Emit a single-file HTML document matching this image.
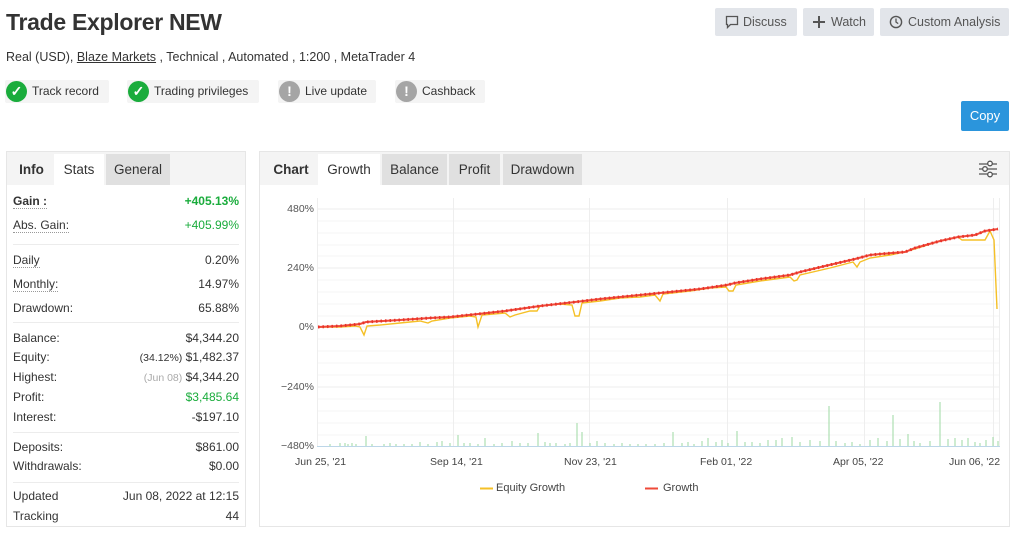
<!DOCTYPE html>
<html><head><meta charset="utf-8"><style>
*{box-sizing:border-box;margin:0;padding:0}
body{width:1024px;height:535px;background:#fff;font-family:"Liberation Sans",sans-serif;color:#333;position:relative;overflow:hidden}
.a{position:absolute}
h1{position:absolute;left:6px;top:9px;font-size:23px;font-weight:bold;color:#333;letter-spacing:-0.3px}
.sub{left:6px;top:50px;font-size:12.5px;color:#333;white-space:nowrap}
.sub u{text-decoration:underline}
.badge{position:absolute;top:80px;height:23px;background:#f4f4f4;border-radius:2px;font-size:12px;line-height:23px;padding-left:27px;white-space:nowrap}
.badge i{position:absolute;left:1px;top:1px;width:21px;height:21px;border-radius:50%;font-style:normal;color:#fff;text-align:center;line-height:21px;font-weight:bold;font-size:14px}
.btn{position:absolute;top:8px;height:28px;background:#e2e5ea;border-radius:2px;font-size:12.5px;color:#555;line-height:28px;padding-left:28px;white-space:nowrap}
.copy{left:961px;top:101px;width:48px;height:30px;background:#2b95dc;color:#fff;font-size:13px;line-height:30px;text-align:center;border-radius:2px}
.panel{border:1px solid #e6e6e6;background:#fff}
.tabs{position:absolute;left:0;top:0;right:0;height:33px;background:#f4f4f4}
.tab{position:absolute;top:2px;height:31px;line-height:31px;font-size:13.5px;text-align:center;color:#333}
.row{position:absolute;left:6px;right:6px;font-size:12px;height:16px;line-height:16px;white-space:nowrap}
.row span{position:absolute;right:0}
.dot{border-bottom:1px dotted #999}
.sep{position:absolute;left:6px;right:6px;height:1px;background:#ececec}
.g{color:#1aac3c}
.yl{position:absolute;font-size:10.5px;color:#555;text-align:right;width:40px}
.xl{position:absolute;font-size:10.5px;color:#444;white-space:nowrap}
</style></head><body>
<h1>Trade Explorer NEW</h1>
<div class="a sub">Real (USD), <u>Blaze Markets</u> , Technical , Automated , 1:200 , MetaTrader 4</div>
<div class="badge" style="left:5px;width:104px"><i style="background:#1aac3c">✓</i>Track record</div>
<div class="badge" style="left:127px;width:132px"><i style="background:#1aac3c">✓</i>Trading privileges</div>
<div class="badge" style="left:278px;width:98px"><i style="background:#a5a5a5">!</i>Live update</div>
<div class="badge" style="left:395px;width:90px"><i style="background:#a5a5a5">!</i>Cashback</div>

<div class="btn" style="left:715px;width:82px"><svg class="a" style="left:10px;top:7px" width="14" height="14" viewBox="0 0 14 14"><path d="M1.5 1.5h11v8h-7l-3 3v-3h-1z" fill="none" stroke="#555" stroke-width="1.3"/></svg>Discuss</div>
<div class="btn" style="left:803px;width:71px"><svg class="a" style="left:9px;top:7px" width="14" height="14"><path d="M7 1v12M1 7h12" stroke="#555" stroke-width="2"/></svg>Watch</div>
<div class="btn" style="left:880px;width:129px"><svg class="a" style="left:9px;top:7px" width="14" height="14"><circle cx="7" cy="7" r="5.6" fill="none" stroke="#555" stroke-width="1.4"/><path d="M7 3.5V7l2.2 1.6" fill="none" stroke="#555" stroke-width="1.3"/></svg>Custom Analysis</div>
<div class="a copy">Copy</div>

<div class="a panel" style="left:6px;top:151px;width:240px;height:376px">
 <div class="tabs" style="background:#f4f4f4"></div>
 <div class="tab" style="left:2px;width:45px;font-weight:bold">Info</div>
 <div class="tab" style="left:47px;width:50px;background:#fff">Stats</div>
 <div class="tab" style="left:99px;width:64px;background:#e0e0e0">General</div>
 <div class="row" style="top:41px"><b class="dot">Gain :</b><span class="g" style="font-weight:bold">+405.13%</span></div>
 <div class="row" style="top:65px"><i class="dot" style="font-style:normal">Abs. Gain:</i><span class="g">+405.99%</span></div>
 <div class="sep" style="top:92px"></div>
 <div class="row" style="top:100px"><i class="dot" style="font-style:normal">Daily</i><span>0.20%</span></div>
 <div class="row" style="top:124px"><i class="dot" style="font-style:normal">Monthly:</i><span>14.97%</span></div>
 <div class="row" style="top:148px">Drawdown:<span>65.88%</span></div>
 <div class="sep" style="top:170px"></div>
 <div class="row" style="top:178px">Balance:<span>$4,344.20</span></div>
 <div class="row" style="top:197px">Equity:<span><small style="font-size:10.5px">(34.12%)</small> $1,482.37</span></div>
 <div class="row" style="top:217px">Highest:<span><small style="font-size:10.5px;color:#aaa">(Jun 08)</small> $4,344.20</span></div>
 <div class="row" style="top:237px">Profit:<span class="g">$3,485.64</span></div>
 <div class="row" style="top:257px">Interest:<span>-$197.10</span></div>
 <div class="sep" style="top:280px"></div>
 <div class="row" style="top:287px">Deposits:<span>$861.00</span></div>
 <div class="row" style="top:306px">Withdrawals:<span>$0.00</span></div>
 <div class="sep" style="top:330px"></div>
 <div class="row" style="top:336px">Updated<span>Jun 08, 2022 at 12:15</span></div>
 <div class="row" style="top:356px">Tracking<span>44</span></div>
</div>

<div class="a panel" style="left:259px;top:151px;width:751px;height:376px">
 <div class="tabs"></div>
 <div class="tab" style="left:4px;width:54px;font-weight:bold">Chart</div>
 <div class="tab" style="left:58px;width:62px;background:#fff">Growth</div>
 <div class="tab" style="left:122px;width:65px;background:#e0e0e0">Balance</div>
 <div class="tab" style="left:189px;width:51px;background:#e0e0e0">Profit</div>
 <div class="tab" style="left:243px;width:79px;background:#e0e0e0">Drawdown</div>
 <svg class="a" style="left:717px;top:7px" width="22" height="20"><g stroke="#555" stroke-width="1.3" fill="#fff"><path d="M2 5h18M2 10h18M2 15h18"/><circle cx="13" cy="4.5" r="2.3"/><circle cx="8" cy="10" r="2.3"/><circle cx="13" cy="15.5" r="2.3"/></g></svg>
</div>

<svg class="a" style="left:0;top:0" width="1024" height="535">
 <g stroke="#eee" stroke-width="1">
  <path d="M317 221H1000M317 233H1000M317 245H1000M317 256H1000M317 280H1000M317 292H1000M317 304H1000M317 316H1000M317 339H1000M317 351H1000M317 363H1000M317 375H1000M317 399H1000M317 411H1000M317 423H1000M317 435H1000" stroke="#f5f5f5"/>
  <path d="M317 209H1000M317 268H1000M317 327H1000M317 387H1000"/>
  <path d="M317.5 198V447M453.5 198V447M589.5 198V447M727.5 198V447M864.5 198V447M993.5 198V447M999.5 198V447"/>
 </g>
 <path d="M317 446.5H1000" stroke="#bcd6e8"/>
 <g stroke="#9ed9a3" stroke-width="1">
  <path d="M330 446V444M340 446V443M345 446V443M348 446V444M352 446V443M356 446V444M366 446V436M372 446V444M384 446V444M390 446V443M396 446V444M404 446V444M412 446V444M420 446V442M428 446V444M437 446V442M442 446V441M450 446V443M458 446V435M464 446V443M470 446V443M478 446V444M485 446V438M494 446V444M502 446V443M512 446V441M520 446V443M528 446V443M538 446V433M545 446V442M550 446V443M556 446V443M565 446V444M570 446V443M577 446V423M582 446V432M590 446V443M597 446V441M605 446V443M614 446V444M622 446V443M630 446V444M638 446V444M646 446V444M655 446V444M664 446V443M673 446V432M682 446V443M688 446V442M694 446V444M702 446V441M708 446V438M716 446V442M722 446V440M728 446V443M737 446V431M745 446V442M752 446V442M760 446V443M768 446V440M776 446V440M782 446V438M792 446V437M800 446V442M810 446V440M820 446V441M829 446V406M836 446V441M845 446V443M852 446V442M860 446V444M870 446V440M878 446V438M887 446V441M893 446V415M900 446V439M908 446V434M914 446V441M920 446V443M930 446V441M940 446V402M948 446V439M955 446V438M962 446V440M968 446V438M975 446V442M980 446V443M986 446V440M993 446V437M998 446V441"/>
 </g>
 <polyline fill="none" stroke="#f5c027" stroke-width="1.4" points="318,327 330,327 340,327 355,326 360,327 364,335 367,326 380,325 400,323 420,321 428,323 432,321 450,318 470,316 476,317 478,327 482,315 505,313 510,317 515,315 530,311 537,311 540,306 560,304 572,305 575,316 579,316 582,303 600,301 620,298 640,297 655,295 660,301 663,294 690,291 710,288 726,287 729,291 733,291 736,285 760,281 790,277 794,281 797,280 800,275 830,268 853,262 857,267 860,262 870,258 890,255 900,253 915,249 940,241 958,237 962,240 965,240 985,240 990,231 994,240 997,309"/>
 <polyline fill="none" stroke="#ef4a38" stroke-width="2" points="318,327 340,326 360,324 366,322 400,320 430,318 450,317 478,314 505,311 540,306 575,302 600,299 630,296 660,293 700,289 727,285 735,283 760,279 790,275 800,272 825,266 855,259 870,255 880,254 905,252 915,248 940,241 958,237 975,235 985,231 998,229"/>
 <polyline fill="none" stroke="#e8312a" stroke-width="3" stroke-dasharray="1.5 3" points="318,327 340,326 360,324 366,322 400,320 430,318 450,317 478,314 505,311 540,306 575,302 600,299 630,296 660,293 700,289 727,285 735,283 760,279 790,275 800,272 825,266 855,259 870,255 880,254 905,252 915,248 940,241 958,237 975,235 985,231 998,229"/>
 <path d="M480 488.5h13" stroke="#f5c027" stroke-width="2"/><path d="M645 488.5h13" stroke="#ef4a38" stroke-width="2"/>
</svg>
<div class="yl" style="left:274px;top:203px">480%</div>
<div class="yl" style="left:274px;top:262px">240%</div>
<div class="yl" style="left:274px;top:321px">0%</div>
<div class="yl" style="left:274px;top:381px">−240%</div>
<div class="yl" style="left:274px;top:440px">−480%</div>
<div class="xl" style="left:295px;top:456px">Jun 25, '21</div>
<div class="xl" style="left:430px;top:456px">Sep 14, '21</div>
<div class="xl" style="left:564px;top:456px">Nov 23, '21</div>
<div class="xl" style="left:700px;top:456px">Feb 01, '22</div>
<div class="xl" style="left:833px;top:456px">Apr 05, '22</div>
<div class="xl" style="left:949px;top:456px">Jun 06, '22</div>
<div class="xl" style="left:496px;top:482px;font-size:11px">Equity Growth</div>
<div class="xl" style="left:663px;top:482px;font-size:11px">Growth</div>
</body></html>
